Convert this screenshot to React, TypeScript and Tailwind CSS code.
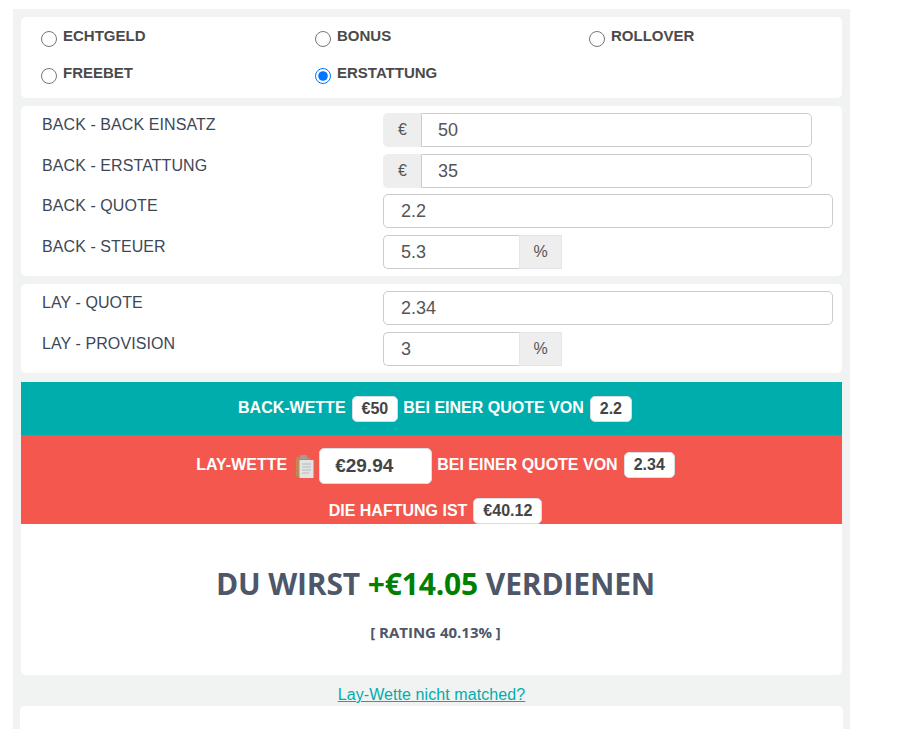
import React from "react";

const sans = "font-['Liberation_Sans',Arial,sans-serif]";
const open = "font-['Open_Sans',sans-serif]";

function Radio({ label, checked }: { label: string; checked?: boolean }) {
  return (
    <label className="flex items-start">
      <input type="radio" name="kind" defaultChecked={checked} className="w-4 h-4 m-0 mt-[14px] shrink-0" />
      <span className="ml-[6px] mt-[11px] text-[15px] leading-[16px] font-bold text-[#4a4a4a]">{label}</span>
    </label>
  );
}

const inputBase =
  "h-[34px] bg-white border border-[#cccccc] text-[18px] text-[#555555] outline-none min-w-0";

function Row({ label, children, gap = "mt-[7px]" }: { label: string; children: React.ReactNode; gap?: string }) {
  return (
    <div className={`flex h-[34px] ${gap}`}>
      <div className="w-[362px] pl-[21px] mt-[1px] text-[16px] leading-[22px] tracking-[0.08px] text-[#3c4858]">{label}</div>
      {children}
    </div>
  );
}

function Euro({ value }: { value: string }) {
  return (
    <div className="flex w-[429px]">
      <span className="w-[38px] h-[34px] flex items-center justify-center pl-px bg-[#eeeeee] rounded-l-[5px] text-[16px] text-[#555555]">€</span>
      <input readOnly value={value} className={`${inputBase} flex-1 pl-4 rounded-r-[5px]`} />
    </div>
  );
}

function Full({ value }: { value: string }) {
  return <input readOnly value={value} className={`${inputBase} w-[450px] pl-[17px] rounded-[5px]`} />;
}

function Percent({ value }: { value: string }) {
  return (
    <div className="flex w-[179px]">
      <input readOnly value={value} className={`${inputBase} w-[136px] pl-[17px] rounded-l-[5px] border-r-0`} />
      <span className="w-[43px] h-[34px] flex items-center justify-center bg-[#eeeeee] border border-[#e6e6e6] text-[16px] text-[#555555]">%</span>
    </div>
  );
}

function Pill({ children, level }: { children: React.ReactNode; level?: boolean }) {
  return (
    <span className={`inline-flex items-center justify-center bg-white rounded-[5px] border border-[#d8dde3] text-[#444444] font-bold text-[16px] h-[26px] px-[9px] ml-[6px] mr-[5px] ${level ? "" : "mt-[2px]"}`}>
      {children}
    </span>
  );
}

function Clipboard() {
  return (
    <svg width="18" height="23" viewBox="0 0 18 23" className="ml-[9px] mr-[5px] shrink-0 mt-[2px]">
      <rect x="0" y="2" width="14" height="20" rx="1.5" fill="#bd8a55" />
      <rect x="3.5" y="5" width="14" height="18" fill="#e2e4e4" />
      <rect x="4" y="0" width="7" height="4" rx="1" fill="#a39c94" />
      <path d="M6 9h9M6 12h9M6 15h9M6 18h7" stroke="#b4b8b8" strokeWidth="1" />
    </svg>
  );
}

export default function App() {
  return (
    <div className={`${sans} w-[898px] h-[729px] bg-white overflow-hidden pt-[9px] pl-[13px]`}>
      <div className="w-[837px] h-[720px] bg-[#f1f3f3] pt-2 px-2">
        <div className="bg-white rounded-[5px] h-[81px] pl-5 grid grid-cols-[274px_274px_1fr] grid-rows-[37px_37px] content-start">
          <Radio label="ECHTGELD" />
          <Radio label="BONUS" />
          <Radio label="ROLLOVER" />
          <Radio label="FREEBET" />
          <Radio label="ERSTATTUNG" checked />
        </div>

        <div className="bg-white rounded-[5px] mt-2 h-[170px] pt-[7px]">
          <Row label="BACK - BACK EINSATZ" gap="mt-0"><Euro value="50" /></Row>
          <Row label="BACK - ERSTATTUNG"><Euro value="35" /></Row>
          <Row label="BACK - QUOTE" gap="mt-[6px]"><Full value="2.2" /></Row>
          <Row label="BACK - STEUER"><Percent value="5.3" /></Row>
        </div>

        <div className="bg-white rounded-[5px] mt-2 h-[89px] pt-[7px]">
          <Row label="LAY - QUOTE" gap="mt-0"><Full value="2.34" /></Row>
          <Row label="LAY - PROVISION"><Percent value="3" /></Row>
        </div>

        <div className="mt-[9px] h-[53px] pl-[12px] pb-[2px] bg-[#00adad] flex items-center justify-center text-white font-bold text-[16px]">
          BACK-WETTE<Pill>€50</Pill>BEI EINER QUOTE VON<Pill>2.2</Pill>
        </div>

        <div className="h-[89px] pl-[13px] bg-[#f3574e] text-white font-bold text-[16px] flex flex-col items-center">
          <div className="flex items-center justify-center h-[38px] pb-[4px] mt-[13px]">
            LAY-WETTE
            <Clipboard />
            <input readOnly value="€29.94" className="w-[113px] h-[36px] pl-[15px] mr-[5px] mt-[2px] rounded-[5px] bg-white border border-[#d8dde3] text-[19px] font-bold text-[#444444] outline-none" />
            BEI EINER QUOTE VON<Pill level>2.34</Pill>
          </div>
          <div className="flex items-center justify-center h-[26px] mt-[12px]">
            DIE HAFTUNG IST<Pill level>€40.12</Pill>
          </div>
        </div>

        <div className={`${open} bg-white rounded-b-[5px] h-[151px] pl-2 text-center text-[#4e5769] font-bold`}>
          <div className="pt-[39px] text-[30px] leading-[42px] tracking-[-0.15px]">
            DU WIRST <span className="text-[#008000]">+€14.05</span> VERDIENEN
          </div>
          <div className="mt-[17px] text-[15px] leading-[20px]">[ RATING 40.13% ]</div>
        </div>

        <div className="h-[31px] flex items-end justify-center">
          <a href="#" className="text-[16px] leading-[22px] tracking-[0.08px] text-[#00adad] underline">Lay-Wette nicht matched?</a>
        </div>

        <div className="bg-white rounded-t-[5px] h-[40px] -mx-px" />
      </div>
    </div>
  );
}
